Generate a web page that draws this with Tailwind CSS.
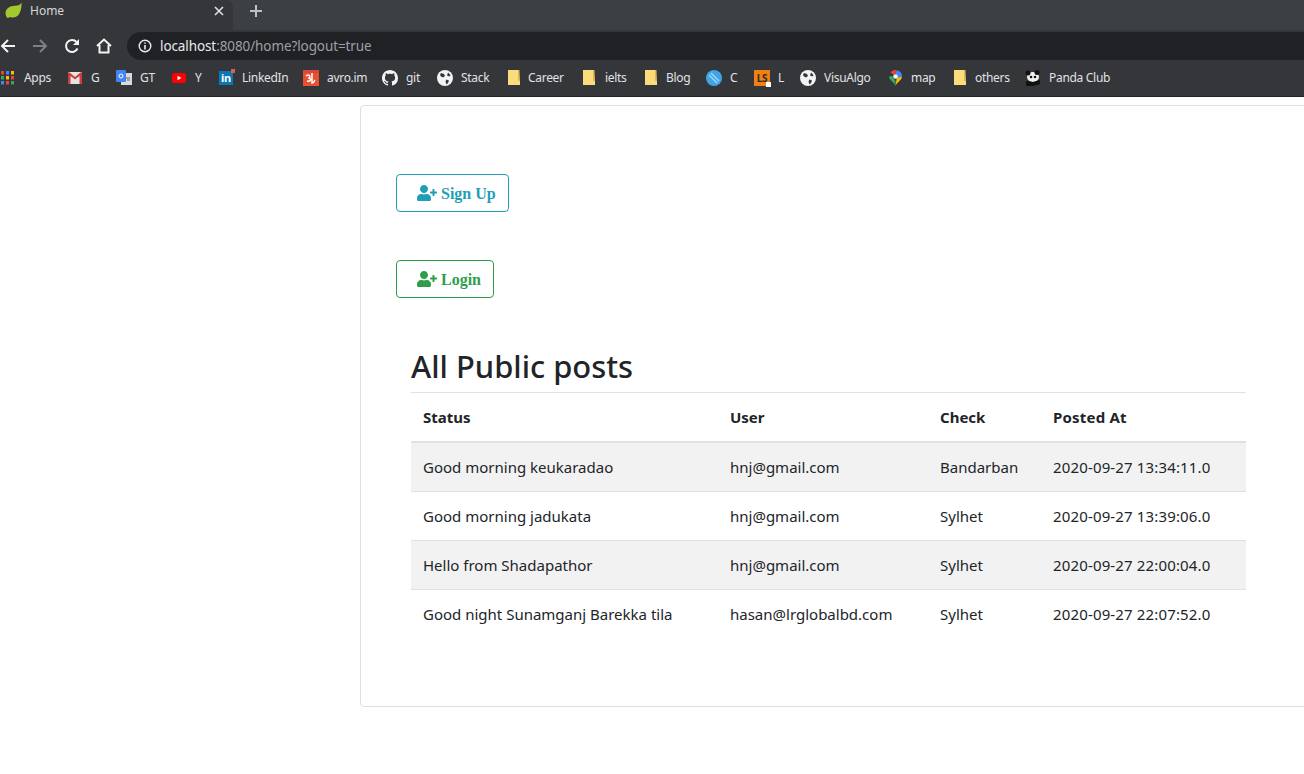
<!DOCTYPE html>
<html lang="en">

<head>
    <meta charset="UTF-8" />
    <meta name="viewport" content="width=device-width, initial-scale=1.0" />
    <title>Home</title>
    <script src="https://cdn.jsdelivr.net/npm/@tailwindcss/browser@4"></script>
</head>

<body class="h-screen w-full overflow-hidden bg-white font-['Noto_Sans',sans-serif]">
    <!-- browser chrome -->
    <div class="h-[97px] bg-[#35363a] border-b border-[#222326] text-[#e8eaed]">
        <div class="h-[30px] flex items-start bg-[#3c3f43]">
            <div class="h-full w-[233px] bg-[#35363a] rounded-tr-lg flex items-start pt-[2px] pl-[5px] pr-[9px] gap-[8px]">
                <svg class="w-[17px] h-[17px]" viewBox="0 0 16 16"><path fill="#a3c92c" d="M15.500 .5c-1 2-3 3-6 3C4 3.500.5 6.500.5 10.500c0 1.500.5 2.500 1 3.500l1 1c1 0 1-1 2-1 1 .5 2.500.5 3.500.5 5 0 8-6 7.500-14.500z"/></svg>
                <span class="text-[12px] leading-[17px] flex-1 text-[#d5d7da]">Home</span>
                <svg class="w-[10px] h-[10px] mt-[4px]" viewBox="0 0 10 10"><path stroke="#dfe1e5" stroke-width="1.600" d="M1 1l8 8M9 1l-8 8"/></svg>
            </div>
            <svg class="w-[14px] h-[14px] ml-4 mt-[4px]" viewBox="0 0 14 14"><path stroke="#bdc1c6" stroke-width="2" d="M7 1v12M1 7h12"/></svg>
        </div>
        <div class="h-[32px] flex items-center">
            <svg class="w-4 h-4 ml-0 shrink-0" viewBox="0 0 16 16" fill="none" stroke="#f1f3f4" stroke-width="2"><path d="M15 8H2M8 2L2 8l6 6"/></svg>
            <svg class="w-4 h-4 ml-4 shrink-0" viewBox="0 0 16 16" fill="none" stroke="#7d8084" stroke-width="2"><path d="M1 8h13M8 2l6 6-6 6"/></svg>
            <svg class="w-4 h-4 ml-4 shrink-0" viewBox="0 0 16 16" fill="none" stroke="#f1f3f4" stroke-width="2"><path d="M13.500 10.500A6 6 0 1 1 12.500 4"/><path fill="#f1f3f4" stroke="none" d="M15 1v6H9z"/></svg>
            <svg class="w-4 h-4 ml-4 shrink-0" viewBox="0 0 16 16" fill="none" stroke="#f1f3f4" stroke-width="2"><path d="M1 8l7-6.500L15 8M3.500 7v7.500h9V7"/></svg>
            <div class="ml-[15px] flex-1 h-[28px] bg-[#202124] rounded-l-full flex items-center pl-[11px]">
                <svg class="w-[14px] h-[14px] shrink-0" viewBox="0 0 14 14" fill="none" stroke="#e8eaed" stroke-width="1.400"><circle cx="7" cy="7" r="5.800"/><path stroke-width="1.600" d="M7 6v4.500M7 3.400v1.400"/></svg>
                <span class="ml-[8px] text-[13.500px] tracking-[-0.1px]">localhost<span class="text-[#9aa0a6]">:8080/home?logout=true</span></span>
            </div>
        </div>
        <div class="h-[34px] pb-[3px] flex items-center text-[12px] text-[#e0e2e5] tracking-[-0.3px]">
            <a class="w-[68px] flex items-center gap-[10px] pl-[1px]">
                <svg class="w-[13px] h-[14px] shrink-0" viewBox="0 0 13 14">
                    <rect width="3" height="3.500" fill="#ea4335"/><rect x="5" width="3" height="3.500" fill="#4285f4"/><rect x="10" width="3" height="3.500" fill="#fbbc05"/>
                    <rect y="5" width="3" height="3.500" fill="#34a853"/><rect x="5" y="5" width="3" height="3.500" fill="#fbbc05"/><rect x="10" y="5" width="3" height="3.500" fill="#ea4335"/>
                    <rect y="10" width="3" height="3.500" fill="#4285f4"/><rect x="5" y="10" width="3" height="3.500" fill="#ea4335"/><rect x="10" y="10" width="3" height="3.500" fill="#34a853"/>
                </svg>Apps</a>
            <a class="w-[48px] flex items-center gap-[9px]">
                <svg class="w-[14px] h-[12px] shrink-0" viewBox="0 0 14 12"><rect width="14" height="12" rx="1" fill="#e8e3e3"/><path fill="#c9403a" d="M0 1l1-1 6 5 6-5 1 1v10a1 1 0 0 1-1 1h-1.500V4L7 7.500 2.500 4v8H1a1 1 0 0 1-1-1z"/></svg>G</a>
            <a class="w-[56px] flex items-center gap-[8px]">
                <svg class="w-4 h-4 shrink-0" viewBox="0 0 16 16"><rect x="5" y="3" width="11" height="12" fill="#d8dadc"/><rect width="10" height="12" rx="1" fill="#4285f4"/><circle cx="5" cy="6" r="2" fill="none" stroke="#fff"/><path stroke="#6b6e72" d="M9 8h5M11 10h3"/></svg>GT</a>
            <a class="w-[47px] flex items-center gap-[9px]">
                <svg class="w-[14px] h-[10px] shrink-0" viewBox="0 0 14 10"><rect width="14" height="10" rx="2.500" fill="#f00"/><path fill="#fff" d="M5.500 2.800v4.400L9.500 5z"/></svg>Y</a>
            <a class="w-[84px] flex items-center gap-[9px]">
                <span class="relative w-[14px] h-[14px] shrink-0 bg-[#0a78b5] text-white text-[11px] font-bold leading-[14px] text-center">in<span class="absolute -top-[2px] -right-[2px] w-[4px] h-[4px] bg-[#d9604c]"></span></span>LinkedIn</a>
            <a class="w-[79px] flex items-center gap-[8px]">
                <svg class="w-4 h-4 shrink-0" viewBox="0 0 16 16"><rect width="16" height="16" fill="#e8512b"/><rect x="0" y="0" width="16" height="3" fill="#d9463f"/><path fill="none" stroke="#fff" stroke-width="1.500" d="M3 6c3-2 5 0 3 2 3 1 1 4-2 3M9 3v10c2 0 2-2 3-3"/></svg>avro.im</a>
            <a class="w-[55px] flex items-center gap-[8px]">
                <svg class="w-4 h-4 shrink-0" viewBox="0 0 16 16"><path fill="#f1f3f4" d="M8 0C3.580 0 0 3.580 0 8c0 3.540 2.290 6.530 5.470 7.590.4.070.55-.17.55-.38 0-.19-.01-.82-.01-1.490-2.010.37-2.530-.49-2.690-.94-.09-.23-.48-.94-.82-1.130-.28-.15-.68-.52-.01-.53.63-.01 1.080.58 1.230.82.720 1.210 1.870.870 2.330.660.070-.52.280-.870.510-1.070-1.780-.2-3.640-.890-3.640-3.950 0-.870.310-1.590.820-2.150-.080-.2-.360-1.020.080-2.120 0 0 .670-.210 2.200.820.640-.180 1.320-.270 2-.270s1.360.090 2 .270c1.530-1.040 2.200-.820 2.200-.820.440 1.100.160 1.920.080 2.120.510.560.820 1.270.820 2.150 0 3.070-1.870 3.750-3.650 3.950.290.250.540.730.540 1.480 0 1.070-.010 1.930-.010 2.200 0 .210.150.460.550.380A8.010 8.010 0 0 0 16 8c0-4.420-3.580-8-8-8z"/></svg>git</a>
            <a class="w-[70px] flex items-center gap-[8px]">
                <svg class="w-4 h-4 shrink-0" viewBox="0 0 16 16"><circle cx="8" cy="8" r="8" fill="#f1f3f4"/><path fill="#35363a" d="M4 3l3 1 1 2-2 1.500-2-1-1-1.500zM9.500 9.500l2.500 1-1 2.500-1.500 1.500-1-3zM11 2.500l2.500 2.500-1 1.500-2.500-1z"/></svg>Stack</a>
            <a class="w-[75px] flex items-center gap-[8px] pl-[1px]">
                <svg class="w-[12px] h-[15px] shrink-0" viewBox="0 0 12 15"><path fill="#fbdc7d" d="M0 0h10v11h2v4H0z"/><path fill="#e0b94f" d="M10 0h1.500L12 11h-2z"/></svg>Career</a>
            <a class="w-[62px] flex items-center gap-[10px] pl-[1px]">
                <svg class="w-[12px] h-[15px] shrink-0" viewBox="0 0 12 15"><path fill="#fbdc7d" d="M0 0h10v11h2v4H0z"/><path fill="#e0b94f" d="M10 0h1.500L12 11h-2z"/></svg>ielts</a>
            <a class="w-[62px] flex items-center gap-[9px] pl-[1px]">
                <svg class="w-[12px] h-[15px] shrink-0" viewBox="0 0 12 15"><path fill="#fbdc7d" d="M0 0h10v11h2v4H0z"/><path fill="#e0b94f" d="M10 0h1.500L12 11h-2z"/></svg>Blog</a>
            <a class="w-[48px] flex items-center gap-[8px]">
                <svg class="w-4 h-4 shrink-0" viewBox="0 0 16 16"><circle cx="8" cy="8" r="8" fill="#3da5e8"/><path stroke="#9fd6f5" stroke-width="1.500" d="M3 5l8 8M5 3l8 8"/></svg>C</a>
            <a class="w-[46px] flex items-center gap-[8px]">
                <span class="relative w-4 h-4 shrink-0 bg-[#f08013] text-[#2a2a2a] text-[10px] font-bold leading-[16px] text-center">LS<span class="absolute -bottom-[1px] -right-[1px] w-[5px] h-[5px] bg-white"></span></span>L</a>
            <a class="w-[88px] flex items-center gap-[8px]">
                <svg class="w-4 h-4 shrink-0" viewBox="0 0 16 16"><circle cx="8" cy="8" r="8" fill="#f1f3f4"/><path fill="#35363a" d="M4 3l3 1 1 2-2 1.500-2-1-1-1.500zM9.500 9.500l2.500 1-1 2.500-1.500 1.500-1-3zM11 2.500l2.500 2.500-1 1.500-2.500-1z"/></svg>VisuAlgo</a>
            <a class="w-[65px] flex items-center gap-[9px] pl-[1px]">
                <svg class="w-[13px] h-4 shrink-0" viewBox="0 0 13 16"><path fill="#34a853" d="M6.500 16C5 12 0 10 0 6.500L3 6l3.500 5z"/><path fill="#fbbc05" d="M6.500 16C8 12 13 10 13 6.500H8z"/><path fill="#4285f4" d="M13 6.500A6.500 6.500 0 0 0 8 .2L6 4l3 4z"/><path fill="#ea4335" d="M8 .2A6.500 6.500 0 0 0 1.500 2.300L4.500 5 6 4z"/><circle cx="6.500" cy="6.500" r="2.300" fill="#f1f3f4"/></svg>map</a>
            <a class="w-[72px] flex items-center gap-[9px] pl-[1px]">
                <svg class="w-[12px] h-[15px] shrink-0" viewBox="0 0 12 15"><path fill="#fbdc7d" d="M0 0h10v11h2v4H0z"/><path fill="#e0b94f" d="M10 0h1.500L12 11h-2z"/></svg>others</a>
            <a class="flex items-center gap-[8px]">
                <svg class="w-4 h-4 shrink-0" viewBox="0 0 16 16"><rect width="16" height="16" fill="#35363a"/><ellipse cx="8" cy="7" rx="6" ry="5" fill="#f1f1f1"/><circle cx="3" cy="3" r="2.500" fill="#111"/><circle cx="12" cy="2.500" r="2.500" fill="#111"/><circle cx="6" cy="7" r="1.300" fill="#111"/><circle cx="10" cy="7" r="1.300" fill="#111"/><path fill="#111" d="M1 11l7 1 7-2v4l-7 2H1z"/></svg>Panda Club</a>
        </div>
    </div>

    <!-- page -->
    <div class="ml-[360px] mt-2 w-[1000px] h-[602px] border border-[#dfdfdf] rounded-[4px] pt-[68px] pl-[35px]">
        <a class="inline-flex items-center h-[38px] pl-[20px] pr-[12px] border border-[#1f9fb5] rounded-[4px] text-[#1f9fb5] font-['Liberation_Serif',serif] font-bold text-[16px]">
            <svg class="w-[20px] h-[16px] mr-[4px]" viewBox="0 0 640 512" fill="currentColor"><path d="M624 208h-64v-64c0-8.800-7.200-16-16-16h-32c-8.800 0-16 7.200-16 16v64h-64c-8.800 0-16 7.200-16 16v32c0 8.800 7.200 16 16 16h64v64c0 8.800 7.200 16 16 16h32c8.800 0 16-7.200 16-16v-64h64c8.800 0 16-7.200 16-16v-32c0-8.800-7.200-16-16-16zm-400 48c70.700 0 128-57.300 128-128S294.700 0 224 0 96 57.300 96 128s57.300 128 128 128zm89.600 32h-16.700c-22.200 10.200-46.900 16-72.900 16s-50.600-5.800-72.900-16h-16.700C60.200 288 0 348.200 0 422.400V464c0 26.500 21.500 48 48 48h352c26.500 0 48-21.500 48-48v-41.600c0-74.200-60.200-134.400-134.400-134.400z"/></svg>
            <span class="pt-[2px]">Sign Up</span></a>
        <div class="h-[48px]"></div>
        <a class="inline-flex items-center h-[38px] pl-[20px] pr-[12px] border border-[#2d9f4b] rounded-[4px] text-[#2d9f4b] font-['Liberation_Serif',serif] font-bold text-[16px]">
            <svg class="w-[20px] h-[16px] mr-[4px]" viewBox="0 0 640 512" fill="currentColor"><path d="M624 208h-64v-64c0-8.800-7.200-16-16-16h-32c-8.800 0-16 7.200-16 16v64h-64c-8.800 0-16 7.200-16 16v32c0 8.800 7.200 16 16 16h64v64c0 8.800 7.200 16 16 16h32c8.800 0 16-7.200 16-16v-64h64c8.800 0 16-7.200 16-16v-32c0-8.800-7.200-16-16-16zm-400 48c70.700 0 128-57.300 128-128S294.700 0 224 0 96 57.300 96 128s57.300 128 128 128zm89.600 32h-16.700c-22.200 10.200-46.900 16-72.900 16s-50.600-5.800-72.900-16h-16.700C60.200 288 0 348.200 0 422.400V464c0 26.500 21.500 48 48 48h352c26.500 0 48-21.500 48-48v-41.600c0-74.200-60.200-134.400-134.400-134.400z"/></svg>
            <span class="pt-[2px]">Login</span></a>

        <div class="ml-[15px] mt-[45px] w-[835px] text-[#212529]">
            <h2 class="text-[30.900px] leading-[47px] mb-[2px] font-medium">All Public posts</h2>
            <table class="w-full table-fixed border-collapse text-[15px]">
                <thead>
                    <tr class="h-[49px] border-t border-[#dee2e6] border-b-2">
                        <th class="w-[307px] px-3 text-left font-bold">Status</th>
                        <th class="w-[210px] px-3 text-left font-bold">User</th>
                        <th class="w-[113px] px-3 text-left font-bold">Check</th>
                        <th class="px-3 text-left font-bold tracking-[0.2px]">Posted At</th>
                    </tr>
                </thead>
                <tbody>
                    <tr class="h-[50px] bg-[#f2f2f2] border-t border-[#dee2e6]">
                        <td class="px-3">Good morning keukaradao</td>
                        <td class="px-3">hnj@gmail.com</td>
                        <td class="px-3">Bandarban</td>
                        <td class="px-3 tracking-[0.15px]">2020-09-27 13:34:11.0</td>
                    </tr>
                    <tr class="h-[49px] border-t border-[#dee2e6]">
                        <td class="px-3">Good morning jadukata</td>
                        <td class="px-3">hnj@gmail.com</td>
                        <td class="px-3">Sylhet</td>
                        <td class="px-3 tracking-[0.15px]">2020-09-27 13:39:06.0</td>
                    </tr>
                    <tr class="h-[49px] bg-[#f2f2f2] border-t border-[#dee2e6]">
                        <td class="px-3">Hello from Shadapathor</td>
                        <td class="px-3">hnj@gmail.com</td>
                        <td class="px-3">Sylhet</td>
                        <td class="px-3 tracking-[0.15px]">2020-09-27 22:00:04.0</td>
                    </tr>
                    <tr class="h-[49px] border-t border-[#dee2e6]">
                        <td class="px-3">Good night Sunamganj Barekka tila</td>
                        <td class="px-3">hasan@lrglobalbd.com</td>
                        <td class="px-3">Sylhet</td>
                        <td class="px-3 tracking-[0.15px]">2020-09-27 22:07:52.0</td>
                    </tr>
                </tbody>
            </table>
        </div>
    </div>
</body>

</html>
